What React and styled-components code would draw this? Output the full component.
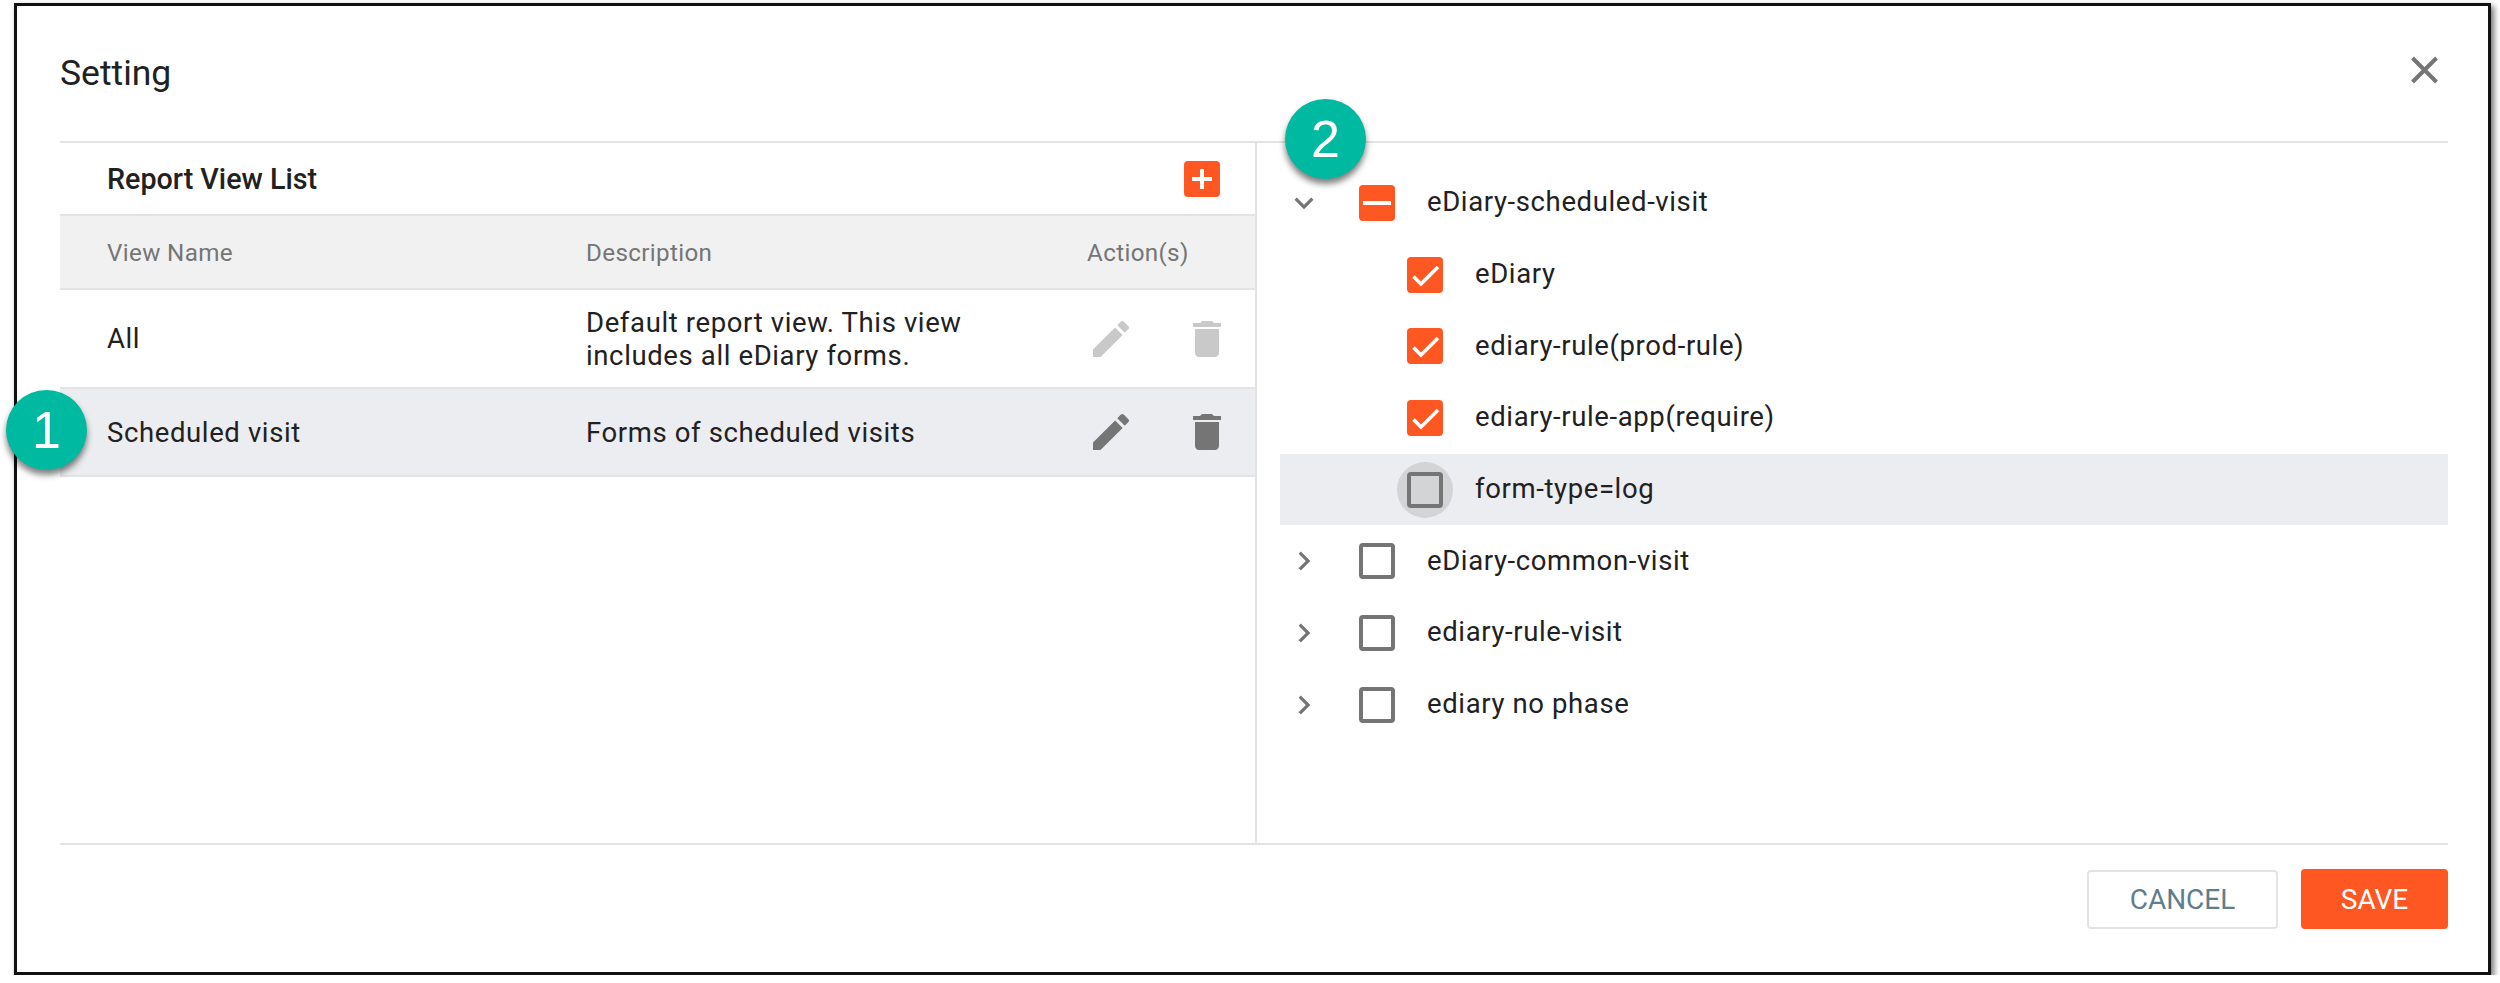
import React from "react";
import styled, { createGlobalStyle } from "styled-components";

const Global = createGlobalStyle`
  html, body { margin: 0; padding: 0; background: #fff; }
  body { font-family: Roboto, "Liberation Sans", sans-serif; color: #212121; }
`;

const Frame = styled.div`
  position: relative;
  box-sizing: border-box;
  width: 2477px;
  height: 972px;
  margin: 3px 0 0 14px;
  border: 3px solid #111;
  background: #fff;
  box-shadow: 3px 3px 6px rgba(0, 0, 0, 0.55);
  padding: 0 40px 0 43px;
  display: flex;
  flex-direction: column;
`;

const Header = styled.header`
  height: 135px;
  flex: none;
  display: flex;
  align-items: flex-start;
  justify-content: space-between;
  border-bottom: 2px solid #e3e3e3;
  box-sizing: content-box;
`;

const Title = styled.h1`
  margin: 45px 0 0;
  font-size: 35.5px;
  line-height: 44px;
  font-weight: 400;
  color: #212121;
`;

const Close = styled.svg`
  width: 27px;
  height: 28px;
  margin: 50px 10px 0 0;
  stroke: #757575;
  stroke-width: 4;
  fill: none;
`;

const Main = styled.div`
  flex: none;
  height: 700px;
  display: flex;
  border-bottom: 2px solid #e3e3e3;
`;

const LeftPanel = styled.section`
  width: 1195px;
  flex: none;
  border-right: 2px solid #e3e3e3;
`;

const ListHead = styled.div`
  height: 71px;
  display: flex;
  align-items: center;
  justify-content: space-between;
  padding: 0 35px 0 47px;
  border-bottom: 2px solid #e3e3e3;
`;

const ListTitle = styled.div`
  font-size: 28.7px;
  font-weight: 500;
  color: #212121;
`;

const AddButton = styled.div`
  width: 36px;
  height: 36px;
  border-radius: 4px;
  background: #ff5722;
  display: flex;
  align-items: center;
  justify-content: center;
`;

const Row = styled.div`
  display: grid;
  grid-template-columns: 479px 501px 1fr;
  align-items: center;
  box-sizing: border-box;
  padding-left: 47px;
  height: ${(p) => p.$h}px;
  background: ${(p) => p.$bg || "#fff"};
  border-bottom: 2px solid #e3e3e3;
  font-size: 27.5px;
  line-height: 33px;
  letter-spacing: 0.62px;
  color: ${(p) => (p.$muted ? "#757575" : "#212121")};
`;

const HeadCell = styled.div`
  font-size: 24.2px;
  letter-spacing: 0.35px;
  padding-top: 2px;
`;

const Actions = styled.div`
  display: flex;
  gap: 48px;
  margin-left: 0;
`;

const Glyph = styled.svg`
  width: 48px;
  height: 48px;
  fill: ${(p) => (p.$off ? "#c9c9c9" : "#757575")};
`;

const RightPanel = styled.section`
  flex: 1;
  padding: 24px 0 0 23px;
`;

const TreeRow = styled.div`
  height: 71.7px;
  display: flex;
  align-items: center;
  padding-left: ${(p) => (p.$child ? 127 : 79)}px;
  background: ${(p) => (p.$hover ? "#ecedf1" : "transparent")};
  position: relative;
  font-size: 27.5px;
  letter-spacing: 0.62px;
  color: #212121;
`;

const Label = styled.span`
  margin-top: -2px;
`;

const Chevron = styled.svg`
  position: absolute;
  left: 5px;
  width: 38px;
  height: 38px;
  fill: #757575;
`;

const Box = styled.div`
  position: relative;
  box-sizing: border-box;
  width: 36px;
  height: 36px;
  flex: none;
  border-radius: 4px;
  margin-right: 32px;
  border: ${(p) => (p.$on ? "none" : "4px solid #757575")};
  background: ${(p) => (p.$on ? "#ff5722" : p.$hover ? "#d3d4d6" : "#fff")};
  display: flex;
  align-items: center;
  justify-content: center;
`;

const Halo = styled.div`
  position: absolute;
  left: -10px;
  top: -10px;
  width: 56px;
  height: 56px;
  border-radius: 50%;
  background: #d3d4d6;
  z-index: 0;
`;

const BoxWrap = styled.div`
  position: relative;
  flex: none;
  > ${Box} { z-index: 1; }
`;

const Dash = styled.div`
  width: 28px;
  height: 4px;
  background: #fff;
`;

const Footer = styled.footer`
  flex: 1;
  display: flex;
  justify-content: flex-end;
  align-items: flex-start;
  padding-top: 24px;
  gap: 23px;
`;

const Button = styled.button`
  box-sizing: border-box;
  width: ${(p) => p.$w}px;
  height: ${(p) => (p.$primary ? 60 : 59)}px;
  margin-top: ${(p) => (p.$primary ? 0 : 1)}px;
  border-radius: 4px;
  border: ${(p) => (p.$primary ? "none" : "2px solid #e3e3e3")};
  background: ${(p) => (p.$primary ? "#ff5722" : "#fff")};
  color: ${(p) => (p.$primary ? "#fff" : "#5f7d8b")};
  font-family: Roboto, "Liberation Sans", sans-serif;
  font-size: 28px;
  font-weight: 400;
  padding: 0;
`;

const Badge = styled.div`
  position: absolute;
  left: ${(p) => p.$x}px;
  top: ${(p) => p.$y}px;
  width: 81px;
  height: 80px;
  border-radius: 50%;
  background: #00b9a1;
  color: #fff;
  box-shadow: 0 5px 6px rgba(0, 0, 0, 0.5);
  display: flex;
  align-items: center;
  justify-content: center;
  font-family: "Liberation Sans", Arial, sans-serif;
  font-size: 52px;
  z-index: 5;
`;

const EditIcon = ({ off }) => (
  <Glyph $off={off} viewBox="0 0 24 24">
    <path d="M3 17.25V21h3.75L17.81 9.94l-3.75-3.75L3 17.25zM20.71 7.04c.39-.39.39-1.02 0-1.41l-2.34-2.34c-.39-.39-1.02-.39-1.41 0l-1.83 1.83 3.75 3.75 1.83-1.83z" />
  </Glyph>
);

const DeleteIcon = ({ off }) => (
  <Glyph $off={off} viewBox="0 0 24 24">
    <path d="M6 19c0 1.1.9 2 2 2h8c1.1 0 2-.9 2-2V7H6v12zM19 4h-3.5l-1-1h-5l-1 1H5v2h14V4z" />
  </Glyph>
);

const Check = () => (
  <svg width="36" height="36" viewBox="0 0 36 36" fill="none" stroke="#fff" strokeWidth="3.6">
    <path d="M6.5 19.5 L14 27 L31 10" />
  </svg>
);

const ChevronIcon = ({ open }) => (
  <Chevron viewBox="0 0 24 24">
    <path d={open ? "M16.59 8.59L12 13.17 7.41 8.59 6 10l6 6 6-6z" : "M10 6L8.59 7.41 13.17 12l-4.58 4.59L10 18l6-6z"} />
  </Chevron>
);

const Parent = ({ label, open, children }) => (
  <TreeRow>
    <ChevronIcon open={open} />
    {children}
    <Label>{label}</Label>
  </TreeRow>
);

const Child = ({ label }) => (
  <TreeRow $child>
    <Box $on><Check /></Box>
    <Label>{label}</Label>
  </TreeRow>
);

export default function App() {
  return (
    <>
      <Global />
      <Frame>
        <Badge $x={-11} $y={384}>1</Badge>
        <Badge $x={1268} $y={93}>2</Badge>
        <Header>
          <Title>Setting</Title>
          <Close viewBox="0 0 27 28">
            <path d="M1.5 2 L25.5 26 M25.5 2 L1.5 26" />
          </Close>
        </Header>
        <Main>
          <LeftPanel>
            <ListHead>
              <ListTitle>Report View List</ListTitle>
              <AddButton>
                <svg width="24" height="24" viewBox="0 0 24 24" fill="#fff">
                  <path d="M10 2h4v8h8v4h-8v8h-4v-8H2v-4h8z" />
                </svg>
              </AddButton>
            </ListHead>
            <Row $h={74} $bg="#f1f1f2" $muted>
              <HeadCell>View Name</HeadCell>
              <HeadCell>Description</HeadCell>
              <HeadCell>Action(s)</HeadCell>
            </Row>
            <Row $h={99}>
              <div>All</div>
              <div>Default report view. This view<br />includes all eDiary forms.</div>
              <Actions><EditIcon off /><DeleteIcon off /></Actions>
            </Row>
            <Row $h={88} $bg="#ecedf1">
              <div>Scheduled visit</div>
              <div>Forms of scheduled visits</div>
              <Actions><EditIcon /><DeleteIcon /></Actions>
            </Row>
          </LeftPanel>
          <RightPanel>
            <Parent label="eDiary-scheduled-visit" open>
              <Box $on><Dash /></Box>
            </Parent>
            <Child label="eDiary" />
            <Child label="ediary-rule(prod-rule)" />
            <Child label="ediary-rule-app(require)" />
            <TreeRow $child $hover>
              <BoxWrap>
                <Halo />
                <Box $hover />
              </BoxWrap>
              <Label>form-type=log</Label>
            </TreeRow>
            <Parent label="eDiary-common-visit"><Box /></Parent>
            <Parent label="ediary-rule-visit"><Box /></Parent>
            <Parent label="ediary no phase"><Box /></Parent>
          </RightPanel>
        </Main>
        <Footer>
          <Button $w={191}>CANCEL</Button>
          <Button $w={147} $primary>SAVE</Button>
        </Footer>
      </Frame>
    </>
  );
}
